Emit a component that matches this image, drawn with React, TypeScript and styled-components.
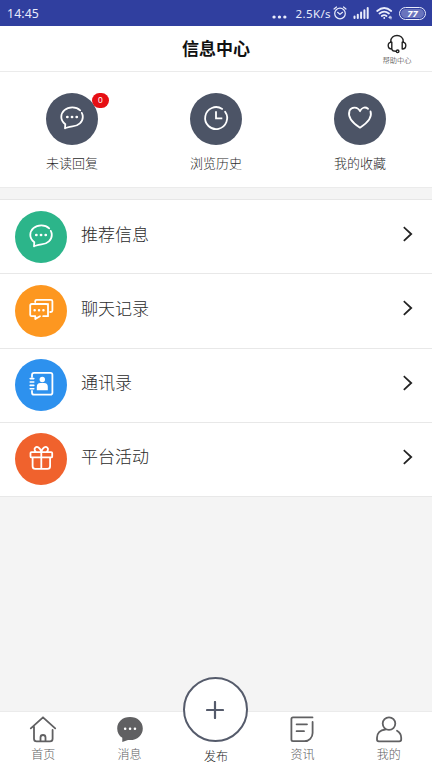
import React from 'react';
import styled, { createGlobalStyle } from 'styled-components';

const GlobalStyle = createGlobalStyle`
  * { box-sizing: border-box; }
  body { margin: 0; font-family: "Noto Sans CJK SC", sans-serif; color: #2b2b2b; background: #f4f4f4; }
`;

const Screen = styled.div`
  width: 432px;
  height: 768px;
  display: flex;
  flex-direction: column;
  background: #f4f4f4;
  overflow: hidden;
`;

const StatusBar = styled.div`
  flex: none;
  height: 26px;
  padding: 0 6px 0 7px;
  display: flex;
  align-items: center;
  background: #303f9f;
  color: #e9ecfb;
  font-family: "Noto Sans", sans-serif;
`;

const Clock = styled.span`
  flex: 1;
  padding-top: 1px;
  font-size: 12.3px;
  line-height: 26px;
  letter-spacing: 0.1px;
`;

const Speed = styled.span`
  font-size: 11.5px;
  line-height: 26px;
  padding-top: 1px;
  letter-spacing: 0.4px;
  margin: 0 2px 0 8px;
`;

const Glyph = styled.svg<{ $gap?: number }>`
  display: block;
  flex: none;
  margin-left: ${(p) => p.$gap ?? 0}px;
  fill: none;
  stroke: currentColor;
  stroke-linecap: round;
  stroke-linejoin: round;
`;

const MoreDots = styled(Glyph)`
  margin-top: 7px;
`;

const Battery = styled.span`
  width: 27px;
  height: 13px;
  margin-left: 6px;
  padding: 1px;
  border: 1.4px solid #e9ecfb;
  border-radius: 7px;
  display: flex;
`;

const BatteryLevel = styled.span`
  flex: 1;
  border-radius: 5px;
  background: #6974bd;
  color: #fff;
  font: italic bold 9.5px/9px "Noto Sans", sans-serif;
  text-align: center;
`;

const Header = styled.header`
  flex: none;
  height: 46px;
  display: grid;
  grid-template-columns: 70px 1fr 70px;
  border-bottom: 1px solid #ebebeb;
  background: #fff;
`;

const Title = styled.h1`
  grid-column: 2;
  margin: 0;
  font-size: 17px;
  font-weight: 700;
  line-height: 44px;
  text-align: center;
  color: #111;
`;

const Help = styled.div`
  display: flex;
  flex-direction: column;
  align-items: center;
  padding-top: 8px;
  color: #222;
  font-size: 7.2px;
  font-weight: 300;
  line-height: 10px;
`;

const HelpLabel = styled.span`
  margin-top: 1px;
`;

const Shortcuts = styled.section`
  flex: none;
  height: 116px;
  padding-top: 21px;
  display: grid;
  grid-template-columns: repeat(3, 1fr);
  justify-items: center;
  border-bottom: 1px solid #ebebeb;
  background: #fff;
`;

const Shortcut = styled.div`
  display: flex;
  flex-direction: column;
  align-items: center;
  font-size: 13px;
  font-weight: 300;
  line-height: 20px;
`;

const Disc = styled.div<{ $color: string }>`
  position: relative;
  flex: none;
  width: 52px;
  height: 52px;
  border-radius: 50%;
  background: ${(p) => p.$color};
  color: #fff;
`;

const Badge = styled.span`
  position: absolute;
  left: 46px;
  top: 0;
  width: 17px;
  height: 15px;
  border-radius: 7.5px;
  background: #e60f14;
  font: 8.5px/15px "Liberation Sans", sans-serif;
  text-align: center;
`;

const ShortcutLabel = styled.span`
  margin-top: 8px;
`;

const Menu = styled.nav`
  flex: none;
  margin-top: 11px;
  border-top: 1px solid #e6e6e6;
`;

const MenuRow = styled.div`
  height: 74.25px;
  padding: 0 15px;
  display: flex;
  align-items: center;
  border-bottom: 1.5px solid #e8e8e8;
  background: #fff;
`;

const MenuLabel = styled.span`
  flex: 1;
  margin: -6px 0 0 14px;
  font-size: 17px;
  font-weight: 300;
  line-height: 26px;
`;

const Chevron = styled(Glyph)`
  margin: -5px 3px 0 0;
  color: #222;
`;

const TabBar = styled.nav`
  flex: none;
  height: 57px;
  margin-top: auto;
  display: grid;
  grid-template-columns: repeat(5, 1fr);
  border-top: 1px solid #ebebeb;
  background: #fff;
`;

const Tab = styled.div`
  display: flex;
  flex-direction: column;
  align-items: center;
  padding-top: 2px;
  color: #606062;
  font-size: 12px;
  font-weight: 300;
  line-height: 20px;
`;

const PublishTab = styled(Tab)`
  padding-top: 0;
  margin-top: -35px;
  color: #222;
`;

const PublishButton = styled.div`
  width: 65px;
  height: 65px;
  margin: 0 1px 4px 0;
  display: grid;
  place-items: center;
  border: 2px solid #555b6b;
  border-radius: 50%;
  background: #fff;
  color: #555b6b;
`;

const DiscIcon = ({ children }: { children: React.ReactNode }) => (
  <Glyph width="52" height="52" viewBox="0 0 52 52" strokeWidth="1.8">{children}</Glyph>
);

const TabIcon = ({ children }: { children: React.ReactNode }) => (
  <Glyph width="30" height="30" viewBox="0 0 30 30" strokeWidth="1.8">{children}</Glyph>
);

const ChatIcon = () => (
  <DiscIcon>
    <path d="M34.2 17.3C32 15.2 29.5 14.4 26.3 14.4C20 14.4 15.3 18.5 15.3 24C15.3 27 16.8 29.3 19.3 31.2L19 35.3C22 34.2 23.3 33.5 26.5 33.3C32.5 33 36.8 29 36.8 24C36.8 22.4 36.5 21.2 35.8 19.9" />
    <path d="M21.3 24h.1M26 24h.1M30.7 24h.1" strokeWidth="2.7" />
  </DiscIcon>
);

const HistoryIcon = () => (
  <DiscIcon>
    <path d="M32.2 15.9A11 11 0 1 0 35.1 18.7" />
    <path d="M26 18.2V25.3H32.3" strokeLinecap="butt" strokeLinejoin="miter" />
  </DiscIcon>
);

const HeartIcon = () => (
  <DiscIcon>
    <path d="M34 15.8C31 13.3 27.5 14.7 26 18.2C23.8 13.5 17.5 13.3 15.5 17.7C13.2 24.5 19.5 30.5 26 34.7C32.5 30.5 38.7 24.6 36.5 18.4" />
  </DiscIcon>
);

const ConversationsIcon = () => (
  <DiscIcon>
    <path d="M33 19V31.2H28.2M25 31.2L20.3 34.1V31.2H16.6Q15.2 31.2 15.2 29.8V20.6Q15.2 19 16.8 19H31.3Q33 19 33 20.5" />
    <path d="M20.2 17V16.2Q20.2 14.8 21.6 14.8H35.9Q37.4 14.8 37.4 16.2V25.5Q37.4 27 35.9 27H35.2" />
    <path d="M19.6 25.3h.1M24 25.3h.1M28.4 25.3h.1" strokeWidth="2.4" />
  </DiscIcon>
);

const ContactsIcon = () => (
  <DiscIcon>
    <path d="M17 18V16Q17 13.8 19.2 13.8H35.5Q37.4 13.8 37.4 15.8V33.8Q37.4 35.7 35.5 35.7H19.2Q17 35.7 17 33.4V32" />
    <path d="M15.2 19.6H18.8M15.2 23H18.8M15.2 26.4H18.8M15.2 29.8H18.8" strokeWidth="1.6" />
    <circle cx="27.3" cy="20.5" r="2.7" fill="currentColor" stroke="none" />
    <path d="M21.8 31.2V28Q21.8 23.9 25.4 23.9H29.2Q32.8 23.9 32.8 28V31.2Z" fill="currentColor" stroke="none" />
  </DiscIcon>
);

const GiftIcon = () => (
  <DiscIcon>
    <path d="M16.5 19.1H36.2Q37.2 19.1 37.2 20.1V23.4Q37.2 24.4 36.2 24.4H16.5Q15.5 24.4 15.5 23.4V20.1Q15.5 19.1 16.5 19.1ZM17.6 24.6V33.2Q17.6 35.8 20.2 35.8H32.5Q35.1 35.8 35.1 33.2V24.6M26.3 19.5V35.5M26.3 18.5C25 14.8 22.2 12.8 20.3 14.6C18.7 16.2 20 18 21 18.9M26.3 18.5C27.6 14.8 30.4 12.8 32.3 14.6C33.9 16.2 32.6 18 31.6 18.9" />
  </DiscIcon>
);

const shortcuts = [
  { label: '未读回复', icon: <ChatIcon />, count: 0 },
  { label: '浏览历史', icon: <HistoryIcon /> },
  { label: '我的收藏', icon: <HeartIcon /> },
];

const menu = [
  { label: '推荐信息', color: '#2cb58a', icon: <ChatIcon /> },
  { label: '聊天记录', color: '#fd9720', icon: <ConversationsIcon /> },
  { label: '通讯录', color: '#2d91ee', icon: <ContactsIcon /> },
  { label: '平台活动', color: '#f0622d', icon: <GiftIcon /> },
];

export default function App() {
  return (
    <>
      <GlobalStyle />
      <Screen>
        <StatusBar>
          <Clock>14:45</Clock>
          <MoreDots width="15" height="4" viewBox="0 0 15 4" strokeWidth="3.2">
            <path d="M2 2h.1M7.4 2h.1M12.8 2h.1" />
          </MoreDots>
          <Speed>2.5K/s</Speed>
          <Glyph width="14" height="14" viewBox="0 0 14 14" strokeWidth="1.2">
            <circle cx="7" cy="7.5" r="5.3" />
            <path d="M1 3L3.5 1M13 3L10.5 1M4.6 6.3L7 8.4L9.5 6.3" />
          </Glyph>
          <Glyph $gap={6} width="17" height="12" viewBox="0 0 17 12" strokeWidth="2" strokeLinecap="butt">
            <path d="M1.5 11V9.5M4.8 11V7.8M8.1 11V5.6M11.4 11V3.3M14.7 11V1" />
          </Glyph>
          <Glyph $gap={6} width="17" height="14" viewBox="0 0 17 14" strokeWidth="1.8">
            <path d="M1.2 5Q8.2 -1 15.2 5M3.5 7.5Q8.2 3.8 12.9 7.5M5.8 10Q8.2 8.2 10.5 10M8.2 12h.1" />
            <path d="M13 11.5H15.5Q15 9.6 13.6 10.4Q12.4 12.9 15.3 12.8" strokeWidth=".8" />
          </Glyph>
          <Battery><BatteryLevel>77</BatteryLevel></Battery>
        </StatusBar>

        <Header>
          <Title>信息中心</Title>
          <Help>
            <Glyph width="20" height="20" viewBox="0 0 20 20" strokeWidth="1.4">
              <path d="M3.8 8.2V7.2C3.8 3.8 6.6 1.5 10 1.5S16.2 3.8 16.2 7.2V8.2M4.8 15V8.1C2.4 8.1 1.2 9.3 1.2 11.5S2.4 15 4.8 15ZM15.2 15V8.1C17.6 8.1 18.8 9.3 18.8 11.5S17.6 15 15.2 15ZM4.8 15.2Q5.4 17.2 9 17.2" />
              <circle cx="10.6" cy="17.3" r="1.3" />
            </Glyph>
            <HelpLabel>帮助中心</HelpLabel>
          </Help>
        </Header>

        <Shortcuts>
          {shortcuts.map((s) => (
            <Shortcut key={s.label}>
              <Disc $color="#4c5466">
                {s.icon}
                {s.count !== undefined && <Badge>{s.count}</Badge>}
              </Disc>
              <ShortcutLabel>{s.label}</ShortcutLabel>
            </Shortcut>
          ))}
        </Shortcuts>

        <Menu>
          {menu.map((m) => (
            <MenuRow key={m.label}>
              <Disc $color={m.color}>{m.icon}</Disc>
              <MenuLabel>{m.label}</MenuLabel>
              <Chevron width="12" height="16" viewBox="0 0 12 16" strokeWidth="1.8">
                <path d="M2.5 1.8L9.2 8L2.5 14.2" strokeLinecap="square" strokeLinejoin="miter" />
              </Chevron>
            </MenuRow>
          ))}
        </Menu>

        <TabBar>
          <Tab>
            <TabIcon>
              <path d="M2.8 14.4L15 3.3L27.2 14.4M6 12.8V24.7Q6 27.3 8.6 27.3H22Q24.6 27.3 24.6 24.7V16M12.5 27V23.5Q12.5 21 15 21T17.5 23.5V27" />
            </TabIcon>
            首页
          </Tab>
          <Tab>
            <TabIcon>
              <path d="M15 3C7.6 3 2.2 7.8 2.2 14.4C2.2 18.5 4.2 21.8 7.3 23.8V28L13 26C21.5 27 27.8 21.5 27.8 14.4C27.8 7.8 22.4 3 15 3Z" fill="currentColor" stroke="none" />
              <path d="M10.1 14.7h.1M15 14.7h.1M19.9 14.7h.1" stroke="#fff" strokeWidth="2.5" />
            </TabIcon>
            消息
          </Tab>
          <PublishTab>
            <PublishButton>
              <Glyph width="18" height="18" viewBox="0 0 18 18" strokeWidth="2.2" strokeLinecap="butt">
                <path d="M9 1V17M1 9H17" />
              </Glyph>
            </PublishButton>
            发布
          </PublishTab>
          <Tab>
            <TabIcon>
              <path d="M25.5 3.4H6Q4.4 3.4 4.4 5V25.6Q4.4 27.2 6 27.2H17.5C22 27.2 25.6 23.5 25.6 19V8M9.6 10.3H20M9.6 17.2H17" />
            </TabIcon>
            资讯
          </Tab>
          <Tab>
            <TabIcon>
              <circle cx="15" cy="9.6" r="6.3" />
              <path d="M11.2 15.5C6 16 3 19.5 3 23.8V25.6Q3 27.3 4.7 27.3H25.3Q27.2 27.3 27.2 25.6V23.8Q27.2 19.2 23 16.8" />
            </TabIcon>
            我的
          </Tab>
        </TabBar>
      </Screen>
    </>
  );
}
